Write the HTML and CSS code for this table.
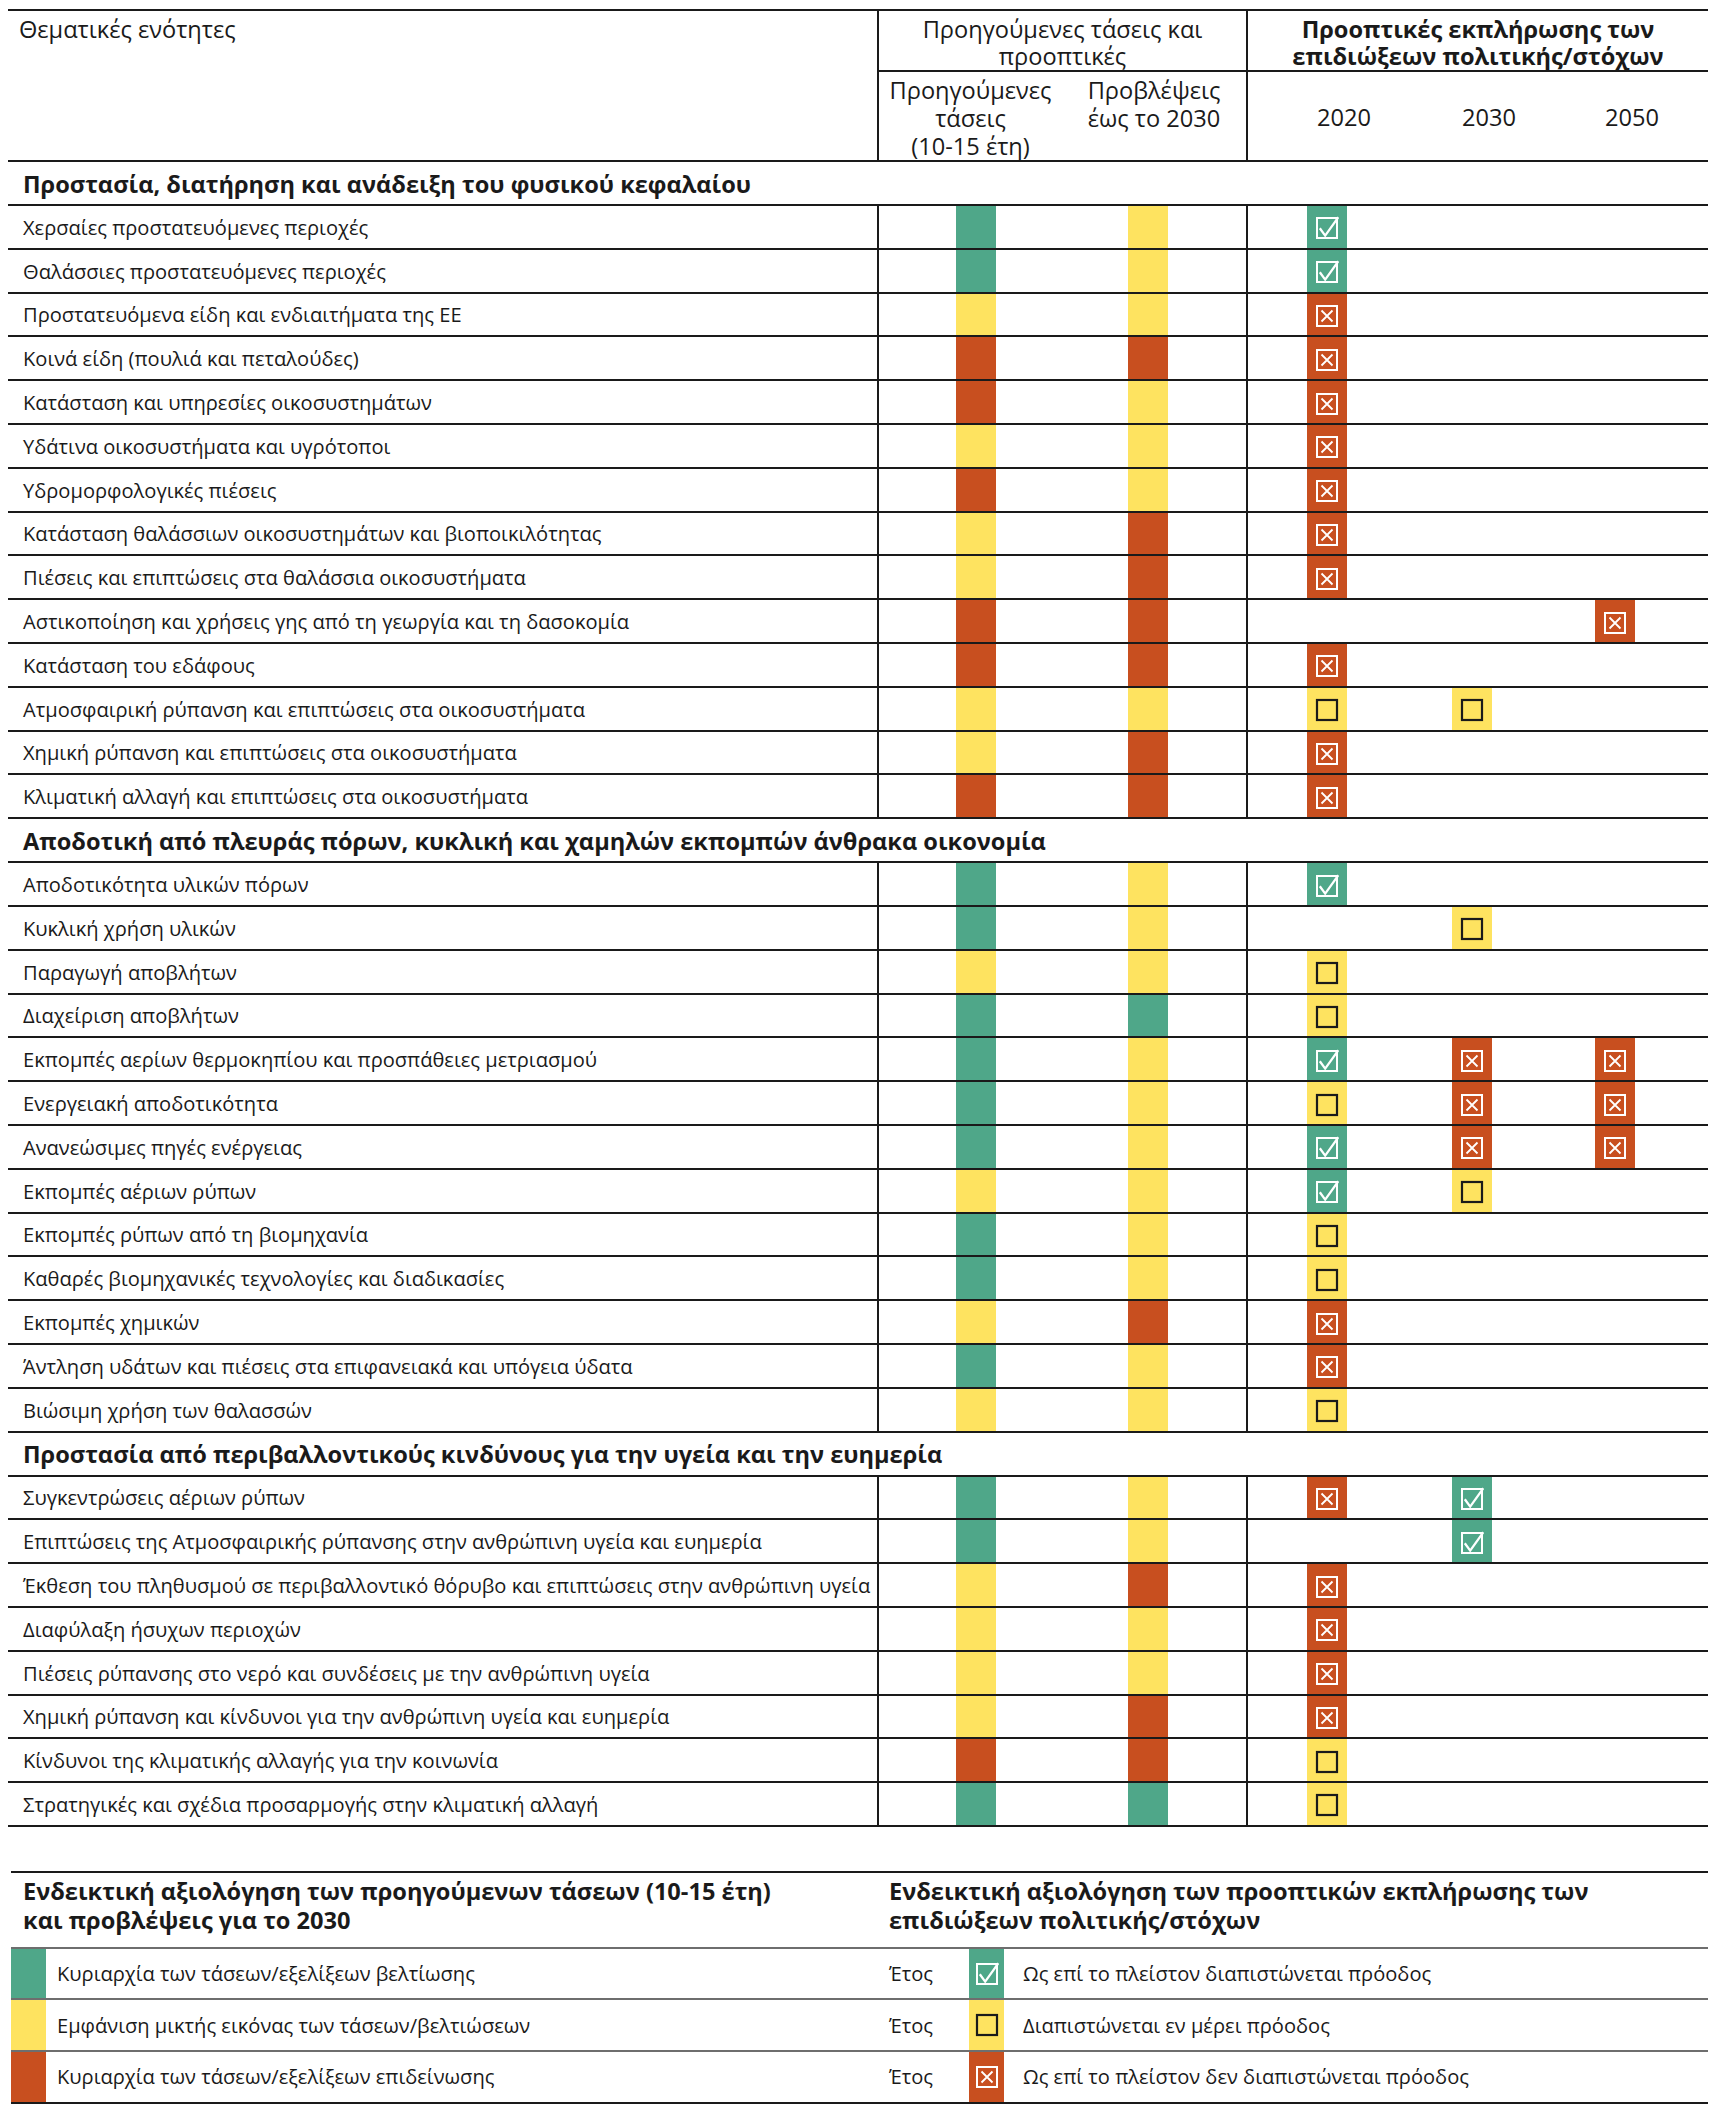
FILE: index.html
```html
<!DOCTYPE html>
<html lang="el">
<head>
<meta charset="utf-8">
<title>Θεματικές ενότητες</title>
<link rel="stylesheet" href="styles.css">
</head>
<body>
<svg class="defs" aria-hidden="true">
  <symbol id="ok" viewBox="0 0 24 24"><rect x="2" y="2" width="20" height="20" fill="none" stroke="#fff" stroke-width="2"/><path d="M4.8 12.2 L10.2 19.6 L23.4 1.2" fill="none" stroke="#fff" stroke-width="2.3" stroke-linejoin="miter"/></symbol>
  <symbol id="no" viewBox="0 0 24 24"><rect x="2" y="2" width="20" height="20" fill="none" stroke="#fff" stroke-width="2"/><path d="M6.5 6.5 L17.5 17.5 M17.5 6.5 L6.5 17.5" fill="none" stroke="#fff" stroke-width="1.8"/></symbol>
  <symbol id="part" viewBox="0 0 24 24"><rect x="2" y="2" width="20" height="20" fill="none" stroke="#1a1a1a" stroke-width="2.2"/></symbol>
</svg>
<div class="page">
  <div class="table">
    <div class="thead">
      <div class="h-lbl">Θεματικές ενότητες</div>
      <div class="h-grpa">Προηγούμενες τάσεις και<br>προοπτικές</div>
      <div class="h-grpb">Προοπτικές εκπλήρωσης των<br>επιδιώξεων πολιτικής/στόχων</div>
      <div class="h-suba">Προηγούμενες<br>τάσεις<br>(10-15 έτη)</div>
      <div class="h-subb">Προβλέψεις<br>έως το 2030</div>
      <div class="h-year y20">2020</div>
      <div class="h-year y30">2030</div>
      <div class="h-year y50">2050</div>
    </div>

    <div class="sec">Προστασία, διατήρηση και ανάδειξη του φυσικού κεφαλαίου</div>
    <div class="row"><div class="lbl">Χερσαίες προστατευόμενες περιοχές</div><div class="ca"><span class="bar g"></span></div><div class="cb"><span class="bar y"></span></div><div class="c20"><span class="bar g"><svg class="ic"><use href="#ok"/></svg></span></div><div class="c30"></div><div class="c50"></div></div>
    <div class="row"><div class="lbl">Θαλάσσιες προστατευόμενες περιοχές</div><div class="ca"><span class="bar g"></span></div><div class="cb"><span class="bar y"></span></div><div class="c20"><span class="bar g"><svg class="ic"><use href="#ok"/></svg></span></div><div class="c30"></div><div class="c50"></div></div>
    <div class="row"><div class="lbl">Προστατευόμενα είδη και ενδιαιτήματα της ΕΕ</div><div class="ca"><span class="bar y"></span></div><div class="cb"><span class="bar y"></span></div><div class="c20"><span class="bar r"><svg class="ic"><use href="#no"/></svg></span></div><div class="c30"></div><div class="c50"></div></div>
    <div class="row"><div class="lbl">Κοινά είδη (πουλιά και πεταλούδες)</div><div class="ca"><span class="bar r"></span></div><div class="cb"><span class="bar r"></span></div><div class="c20"><span class="bar r"><svg class="ic"><use href="#no"/></svg></span></div><div class="c30"></div><div class="c50"></div></div>
    <div class="row"><div class="lbl">Κατάσταση και υπηρεσίες οικοσυστημάτων</div><div class="ca"><span class="bar r"></span></div><div class="cb"><span class="bar y"></span></div><div class="c20"><span class="bar r"><svg class="ic"><use href="#no"/></svg></span></div><div class="c30"></div><div class="c50"></div></div>
    <div class="row"><div class="lbl">Υδάτινα οικοσυστήματα και υγρότοποι</div><div class="ca"><span class="bar y"></span></div><div class="cb"><span class="bar y"></span></div><div class="c20"><span class="bar r"><svg class="ic"><use href="#no"/></svg></span></div><div class="c30"></div><div class="c50"></div></div>
    <div class="row"><div class="lbl">Υδρομορφολογικές πιέσεις</div><div class="ca"><span class="bar r"></span></div><div class="cb"><span class="bar y"></span></div><div class="c20"><span class="bar r"><svg class="ic"><use href="#no"/></svg></span></div><div class="c30"></div><div class="c50"></div></div>
    <div class="row"><div class="lbl">Κατάσταση θαλάσσιων οικοσυστημάτων και βιοποικιλότητας</div><div class="ca"><span class="bar y"></span></div><div class="cb"><span class="bar r"></span></div><div class="c20"><span class="bar r"><svg class="ic"><use href="#no"/></svg></span></div><div class="c30"></div><div class="c50"></div></div>
    <div class="row"><div class="lbl">Πιέσεις και επιπτώσεις στα θαλάσσια οικοσυστήματα</div><div class="ca"><span class="bar y"></span></div><div class="cb"><span class="bar r"></span></div><div class="c20"><span class="bar r"><svg class="ic"><use href="#no"/></svg></span></div><div class="c30"></div><div class="c50"></div></div>
    <div class="row"><div class="lbl">Αστικοποίηση και χρήσεις γης από τη γεωργία και τη δασοκομία</div><div class="ca"><span class="bar r"></span></div><div class="cb"><span class="bar r"></span></div><div class="c20"></div><div class="c30"></div><div class="c50"><span class="bar r"><svg class="ic"><use href="#no"/></svg></span></div></div>
    <div class="row"><div class="lbl">Κατάσταση του εδάφους</div><div class="ca"><span class="bar r"></span></div><div class="cb"><span class="bar r"></span></div><div class="c20"><span class="bar r"><svg class="ic"><use href="#no"/></svg></span></div><div class="c30"></div><div class="c50"></div></div>
    <div class="row"><div class="lbl">Ατμοσφαιρική ρύπανση και επιπτώσεις στα οικοσυστήματα</div><div class="ca"><span class="bar y"></span></div><div class="cb"><span class="bar y"></span></div><div class="c20"><span class="bar y"><svg class="ic"><use href="#part"/></svg></span></div><div class="c30"><span class="bar y"><svg class="ic"><use href="#part"/></svg></span></div><div class="c50"></div></div>
    <div class="row"><div class="lbl">Χημική ρύπανση και επιπτώσεις στα οικοσυστήματα</div><div class="ca"><span class="bar y"></span></div><div class="cb"><span class="bar r"></span></div><div class="c20"><span class="bar r"><svg class="ic"><use href="#no"/></svg></span></div><div class="c30"></div><div class="c50"></div></div>
    <div class="row"><div class="lbl">Κλιματική αλλαγή και επιπτώσεις στα οικοσυστήματα</div><div class="ca"><span class="bar r"></span></div><div class="cb"><span class="bar r"></span></div><div class="c20"><span class="bar r"><svg class="ic"><use href="#no"/></svg></span></div><div class="c30"></div><div class="c50"></div></div>

    <div class="sec">Αποδοτική από πλευράς πόρων, κυκλική και χαμηλών εκπομπών άνθρακα οικονομία</div>
    <div class="row"><div class="lbl">Αποδοτικότητα υλικών πόρων</div><div class="ca"><span class="bar g"></span></div><div class="cb"><span class="bar y"></span></div><div class="c20"><span class="bar g"><svg class="ic"><use href="#ok"/></svg></span></div><div class="c30"></div><div class="c50"></div></div>
    <div class="row"><div class="lbl">Κυκλική χρήση υλικών</div><div class="ca"><span class="bar g"></span></div><div class="cb"><span class="bar y"></span></div><div class="c20"></div><div class="c30"><span class="bar y"><svg class="ic"><use href="#part"/></svg></span></div><div class="c50"></div></div>
    <div class="row"><div class="lbl">Παραγωγή αποβλήτων</div><div class="ca"><span class="bar y"></span></div><div class="cb"><span class="bar y"></span></div><div class="c20"><span class="bar y"><svg class="ic"><use href="#part"/></svg></span></div><div class="c30"></div><div class="c50"></div></div>
    <div class="row"><div class="lbl">Διαχείριση αποβλήτων</div><div class="ca"><span class="bar g"></span></div><div class="cb"><span class="bar g"></span></div><div class="c20"><span class="bar y"><svg class="ic"><use href="#part"/></svg></span></div><div class="c30"></div><div class="c50"></div></div>
    <div class="row"><div class="lbl">Εκπομπές αερίων θερμοκηπίου και προσπάθειες μετριασμού</div><div class="ca"><span class="bar g"></span></div><div class="cb"><span class="bar y"></span></div><div class="c20"><span class="bar g"><svg class="ic"><use href="#ok"/></svg></span></div><div class="c30"><span class="bar r"><svg class="ic"><use href="#no"/></svg></span></div><div class="c50"><span class="bar r"><svg class="ic"><use href="#no"/></svg></span></div></div>
    <div class="row"><div class="lbl">Ενεργειακή αποδοτικότητα</div><div class="ca"><span class="bar g"></span></div><div class="cb"><span class="bar y"></span></div><div class="c20"><span class="bar y"><svg class="ic"><use href="#part"/></svg></span></div><div class="c30"><span class="bar r"><svg class="ic"><use href="#no"/></svg></span></div><div class="c50"><span class="bar r"><svg class="ic"><use href="#no"/></svg></span></div></div>
    <div class="row"><div class="lbl">Ανανεώσιμες πηγές ενέργειας</div><div class="ca"><span class="bar g"></span></div><div class="cb"><span class="bar y"></span></div><div class="c20"><span class="bar g"><svg class="ic"><use href="#ok"/></svg></span></div><div class="c30"><span class="bar r"><svg class="ic"><use href="#no"/></svg></span></div><div class="c50"><span class="bar r"><svg class="ic"><use href="#no"/></svg></span></div></div>
    <div class="row"><div class="lbl">Εκπομπές αέριων ρύπων</div><div class="ca"><span class="bar y"></span></div><div class="cb"><span class="bar y"></span></div><div class="c20"><span class="bar g"><svg class="ic"><use href="#ok"/></svg></span></div><div class="c30"><span class="bar y"><svg class="ic"><use href="#part"/></svg></span></div><div class="c50"></div></div>
    <div class="row"><div class="lbl">Εκπομπές ρύπων από τη βιομηχανία</div><div class="ca"><span class="bar g"></span></div><div class="cb"><span class="bar y"></span></div><div class="c20"><span class="bar y"><svg class="ic"><use href="#part"/></svg></span></div><div class="c30"></div><div class="c50"></div></div>
    <div class="row"><div class="lbl">Καθαρές βιομηχανικές τεχνολογίες και διαδικασίες</div><div class="ca"><span class="bar g"></span></div><div class="cb"><span class="bar y"></span></div><div class="c20"><span class="bar y"><svg class="ic"><use href="#part"/></svg></span></div><div class="c30"></div><div class="c50"></div></div>
    <div class="row"><div class="lbl">Εκπομπές χημικών</div><div class="ca"><span class="bar y"></span></div><div class="cb"><span class="bar r"></span></div><div class="c20"><span class="bar r"><svg class="ic"><use href="#no"/></svg></span></div><div class="c30"></div><div class="c50"></div></div>
    <div class="row"><div class="lbl">Άντληση υδάτων και πιέσεις στα επιφανειακά και υπόγεια ύδατα</div><div class="ca"><span class="bar g"></span></div><div class="cb"><span class="bar y"></span></div><div class="c20"><span class="bar r"><svg class="ic"><use href="#no"/></svg></span></div><div class="c30"></div><div class="c50"></div></div>
    <div class="row"><div class="lbl">Βιώσιμη χρήση των θαλασσών</div><div class="ca"><span class="bar y"></span></div><div class="cb"><span class="bar y"></span></div><div class="c20"><span class="bar y"><svg class="ic"><use href="#part"/></svg></span></div><div class="c30"></div><div class="c50"></div></div>

    <div class="sec">Προστασία από περιβαλλοντικούς κινδύνους για την υγεία και την ευημερία</div>
    <div class="row"><div class="lbl">Συγκεντρώσεις αέριων ρύπων</div><div class="ca"><span class="bar g"></span></div><div class="cb"><span class="bar y"></span></div><div class="c20"><span class="bar r"><svg class="ic"><use href="#no"/></svg></span></div><div class="c30"><span class="bar g"><svg class="ic"><use href="#ok"/></svg></span></div><div class="c50"></div></div>
    <div class="row"><div class="lbl">Επιπτώσεις της Ατμοσφαιρικής ρύπανσης στην ανθρώπινη υγεία και ευημερία</div><div class="ca"><span class="bar g"></span></div><div class="cb"><span class="bar y"></span></div><div class="c20"></div><div class="c30"><span class="bar g"><svg class="ic"><use href="#ok"/></svg></span></div><div class="c50"></div></div>
    <div class="row"><div class="lbl">Έκθεση του πληθυσμού σε περιβαλλοντικό θόρυβο και επιπτώσεις στην ανθρώπινη υγεία</div><div class="ca"><span class="bar y"></span></div><div class="cb"><span class="bar r"></span></div><div class="c20"><span class="bar r"><svg class="ic"><use href="#no"/></svg></span></div><div class="c30"></div><div class="c50"></div></div>
    <div class="row"><div class="lbl">Διαφύλαξη ήσυχων περιοχών</div><div class="ca"><span class="bar y"></span></div><div class="cb"><span class="bar y"></span></div><div class="c20"><span class="bar r"><svg class="ic"><use href="#no"/></svg></span></div><div class="c30"></div><div class="c50"></div></div>
    <div class="row"><div class="lbl">Πιέσεις ρύπανσης στο νερό και συνδέσεις με την ανθρώπινη υγεία</div><div class="ca"><span class="bar y"></span></div><div class="cb"><span class="bar y"></span></div><div class="c20"><span class="bar r"><svg class="ic"><use href="#no"/></svg></span></div><div class="c30"></div><div class="c50"></div></div>
    <div class="row"><div class="lbl">Χημική ρύπανση και κίνδυνοι για την ανθρώπινη υγεία και ευημερία</div><div class="ca"><span class="bar y"></span></div><div class="cb"><span class="bar r"></span></div><div class="c20"><span class="bar r"><svg class="ic"><use href="#no"/></svg></span></div><div class="c30"></div><div class="c50"></div></div>
    <div class="row"><div class="lbl">Κίνδυνοι της κλιματικής αλλαγής για την κοινωνία</div><div class="ca"><span class="bar r"></span></div><div class="cb"><span class="bar r"></span></div><div class="c20"><span class="bar y"><svg class="ic"><use href="#part"/></svg></span></div><div class="c30"></div><div class="c50"></div></div>
    <div class="row"><div class="lbl">Στρατηγικές και σχέδια προσαρμογής στην κλιματική αλλαγή</div><div class="ca"><span class="bar g"></span></div><div class="cb"><span class="bar g"></span></div><div class="c20"><span class="bar y"><svg class="ic"><use href="#part"/></svg></span></div><div class="c30"></div><div class="c50"></div></div>
  </div>

  <div class="legend">
    <div class="lg-head">Ενδεικτική αξιολόγηση των προηγούμενων τάσεων (10-15 έτη)<br>και προβλέψεις για το 2030</div>
    <div class="lg-head lg-right">Ενδεικτική αξιολόγηση των προοπτικών εκπλήρωσης των<br>επιδιώξεων πολιτικής/στόχων</div>

    <div class="lg-item"><span class="sw g"></span><span class="lg-txt">Κυριαρχία των τάσεων/εξελίξεων βελτίωσης</span></div>
    <div class="lg-item lg-right"><span class="lg-year">Έτος</span><span class="sw g"><svg class="ic"><use href="#ok"/></svg></span><span class="lg-txt">Ως επί το πλείστον διαπιστώνεται πρόοδος</span></div>

    <div class="lg-item"><span class="sw y"></span><span class="lg-txt">Εμφάνιση μικτής εικόνας των τάσεων/βελτιώσεων</span></div>
    <div class="lg-item lg-right"><span class="lg-year">Έτος</span><span class="sw y"><svg class="ic"><use href="#part"/></svg></span><span class="lg-txt">Διαπιστώνεται εν μέρει πρόοδος</span></div>

    <div class="lg-item last"><span class="sw r"></span><span class="lg-txt">Κυριαρχία των τάσεων/εξελίξεων επιδείνωσης</span></div>
    <div class="lg-item lg-right last"><span class="lg-year">Έτος</span><span class="sw r"><svg class="ic"><use href="#no"/></svg></span><span class="lg-txt">Ως επί το πλείστον δεν διαπιστώνεται πρόοδος</span></div>
  </div>
</div>
</body>
</html>
```
FILE: styles.css
```css
* { box-sizing: border-box; }

html, body {
  margin: 0;
  padding: 0;
  background: #fff;
}

body {
  font-family: "Open Sans", "Noto Sans", sans-serif;
  color: #1a1a1a;
}

.defs {
  position: absolute;
  width: 0;
  height: 0;
  overflow: hidden;
}

.page {
  width: 1700px;
  margin: 9px 0 0 8px;
}

/* ---------- table ---------- */
.table {
  border-top: 2px solid #1a1a1a;
}

.thead,
.row {
  display: grid;
  grid-template-columns: 869px 185px 184px 154px 154px 154px;
}

.thead {
  grid-template-rows: 61px 88px;
  border-bottom: 2px solid #1a1a1a;
  font-size: 23.6px;
  line-height: 27px;
}

.h-lbl {
  grid-column: 1;
  grid-row: 1 / span 2;
  padding: 5px 0 0 11px;
}

.h-grpa {
  grid-column: 2 / span 2;
  grid-row: 1;
  border-left: 2px solid #1a1a1a;
  border-bottom: 2px solid #1a1a1a;
  text-align: center;
  padding-top: 5px;
}

.h-grpb {
  grid-column: 4 / span 3;
  grid-row: 1;
  border-left: 2px solid #1a1a1a;
  border-bottom: 2px solid #1a1a1a;
  text-align: center;
  font-weight: 700;
  padding-top: 5px;
}

.h-suba {
  grid-column: 2;
  grid-row: 2;
  border-left: 2px solid #1a1a1a;
  text-align: center;
  line-height: 28px;
  padding-top: 4px;
}

.h-subb {
  grid-column: 3;
  grid-row: 2;
  text-align: center;
  line-height: 28px;
  padding-top: 4px;
}

.h-year {
  grid-row: 2;
  text-align: center;
  padding-top: 32px;
}

.h-year.y20 { grid-column: 4; border-left: 2px solid #1a1a1a; padding-left: 40px; }
.h-year.y30 { grid-column: 5; padding-left: 24px; }
.h-year.y50 { grid-column: 6; padding-left: 2px; }

.sec {
  height: 44px;
  border-bottom: 2px solid #1a1a1a;
  font-size: 23.6px;
  font-weight: 700;
  display: flex;
  align-items: center;
  padding-left: 15px;
  padding-top: 1px;
  white-space: nowrap;
}

.row {
  height: 43.8px;
  border-bottom: 2px solid #1a1a1a;
}

.lbl {
  display: flex;
  align-items: center;
  padding-left: 15px;
  padding-top: 1px;
  font-size: 20.1px;
  white-space: nowrap;
}

.ca,
.c20 {
  border-left: 2px solid #1a1a1a;
}

.ca, .cb, .c20, .c30, .c50 {
  display: flex;
}

.bar {
  width: 40px;
  height: 100%;
  display: flex;
  align-items: center;
  justify-content: center;
  padding-top: 3px;
}

.ca .bar { margin-left: 77px; }
.cb .bar { margin-left: 66px; }
.c20 .bar { margin-left: 59px; }
.c30 .bar { margin-left: 52px; }
.c50 .bar { margin-left: 41px; }

.g { background: #4fa789; }
.y { background: #fee360; }
.r { background: #c84f1f; }

.ic {
  width: 24px;
  height: 24px;
  overflow: visible;
}

/* ---------- legend ---------- */
.legend {
  margin: 44px 0 0 3px;
  width: 1697px;
  display: grid;
  grid-template-columns: 866px 831px;
  border-top: 2px solid #1a1a1a;
}

.lg-head {
  height: 76px;
  border-bottom: 2px solid #6e6e6e;
  font-size: 23.6px;
  font-weight: 700;
  line-height: 29.5px;
  padding: 4px 0 0 12px;
  white-space: nowrap;
}

.lg-right {
  padding-left: 12px;
}

.lg-item {
  height: 51.5px;
  border-bottom: 2px solid #6e6e6e;
  display: flex;
  align-items: stretch;
  font-size: 20.1px;
}

.lg-item.last {
  border-bottom-color: #1a1a1a;
  height: 52px;
}

.sw {
  width: 35px;
  flex: none;
  display: flex;
  align-items: center;
  justify-content: center;
}

.lg-txt {
  display: flex;
  align-items: center;
  padding-left: 11px;
}

.lg-right .lg-txt {
  padding-left: 19px;
}

.lg-year {
  display: flex;
  align-items: center;
  width: 80px;
}
```
